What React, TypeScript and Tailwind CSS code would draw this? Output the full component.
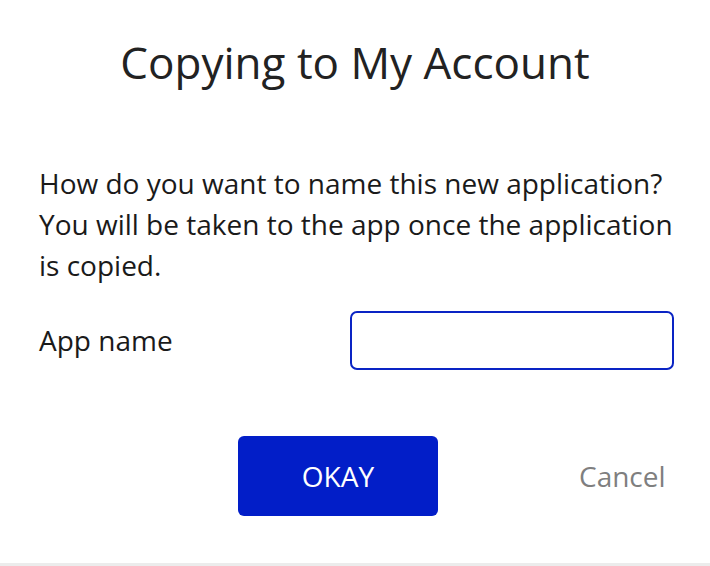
import React from "react";

export default function App() {
  return (
    <div className="w-[710px] h-[566px] bg-white flex flex-col font-['Open_Sans',sans-serif] border-b-[3px] border-[#ececec]">
      <h1 className="text-[44px] leading-[60px] text-[#222222] text-center pt-[32px] font-normal">
        Copying to My Account
      </h1>
      <div className="pl-[39px] pr-[30px] pt-[71px] text-[28px] leading-[41px] text-[#1a1a1a]">
        <p>
          How do you want to name this new application? You will be taken to the app once the application is copied.
        </p>
        <div className="flex items-center mt-[25px]">
          <label className="w-[311px]">App name</label>
          <input
            type="text"
            className="w-[324px] h-[59px] border-2 border-[#0a24c4] rounded-[7px] outline-none px-3 text-[24px]"
          />
        </div>
      </div>
      <div className="flex items-center mt-[66px] pl-[238px]">
        <button className="w-[200px] h-[80px] bg-[#021ec8] rounded-[6px] text-white text-[28px]">
          OKAY
        </button>
        <button className="ml-[141px] text-[28px] text-[#7f7f7f]">Cancel</button>
      </div>
    </div>
  );
}
